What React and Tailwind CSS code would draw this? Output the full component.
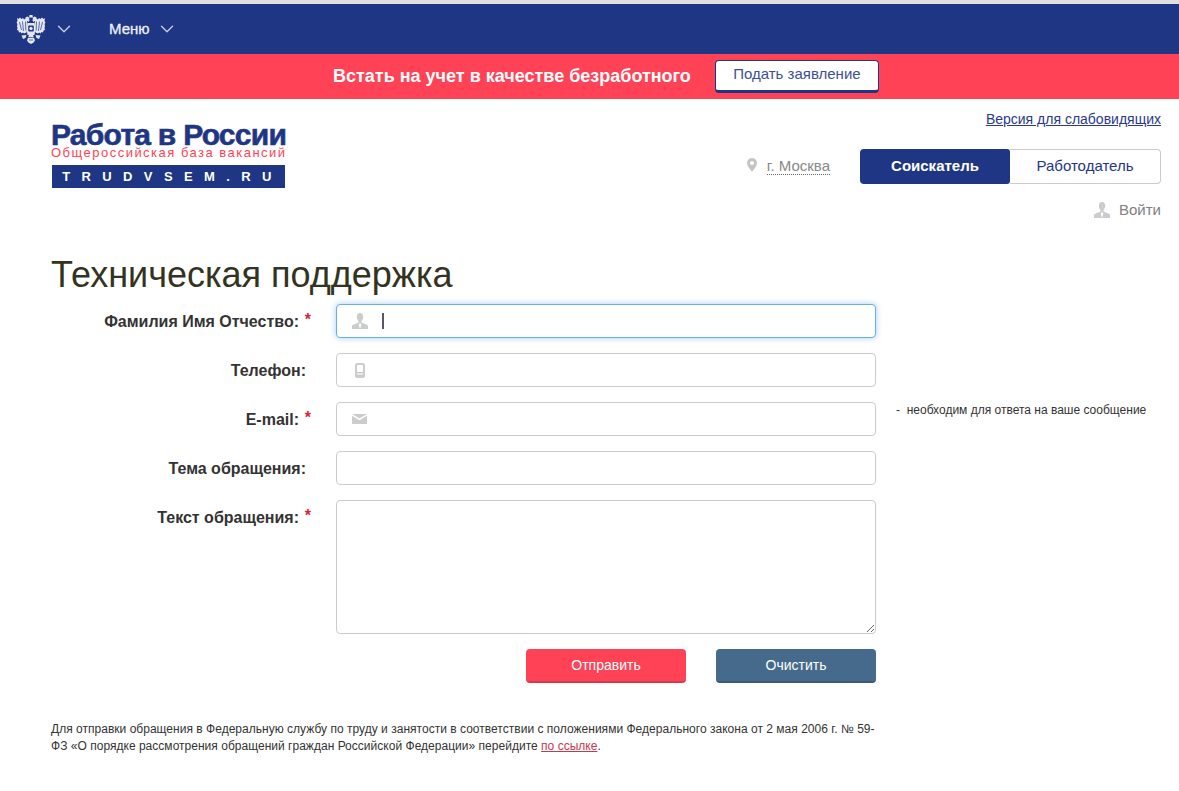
import { ChevronDown } from 'lucide-react';

const navy = 'bg-[#1f3685]';

function Eagle() {
  return (
    <svg width="30" height="29" viewBox="0 0 30 29" fill="#e4e7f1">
      {/* wings */}
      <path d="M1 3l1.500 1L4 2.500 5.500 4 7 3l1 1.500L9.500 3.500 11 6l.8 6-1.300 5.500-2.500 1-1-1-1.500 1-1-1.500-1.500.5-.5-2-1.500-.5.5-2L1 11l.5-2L.5 7.500 1.500 6z" />
      <path d="M29 3l-1.500 1L26 2.500 24.500 4 23 3l-1 1.500-1.500-1L19 6l-.8 6 1.300 5.500 2.500 1 1-1 1.500 1 1-1.500 1.500.5.500-2 1.500-.5-.5-2L29 11l-.5-2 1-1.500-1-1.500z" />
      {/* heads and crowns */}
      <path d="M13.500 0h3l.5 2.500h-4z" />
      <path d="M9.500 2.500l2-1 1.500 1 .5 3-1 1.500-1-1-2 .5z" />
      <path d="M20.500 2.500l-2-1-1.500 1-.5 3 1 1.500 1-1 2 .5z" />
      {/* body with shield */}
      <path d="M11.500 8h7l1 6-1 6h-7l-1-6z" />
      <rect x="12.200" y="10.500" width="5.600" height="6" rx="1" fill="#1f3685" />
      <circle cx="15" cy="13.500" r="1.700" />
      {/* tail and legs */}
      <path d="M13 20h4l2 5.500-1.500 2-2.500 1.500-2.500-1.500-1.500-2z" />
      <path d="M5.500 20.500l5-.5-1 3-2.500 1zM24.500 20.500l-5-.5 1 3 2.500 1z" />
      <g stroke="#1f3685" strokeWidth="0.7" fill="none">
        <path d="M3.500 7l2 8M6.500 6.500l1 9.500M9.500 6.500l.3 9" />
        <path d="M26.500 7l-2 8M23.500 6.500l-1 9.500M20.500 6.500l-.3 9" />
        <path d="M12 22.500h6M13 25h4" />
      </g>
    </svg>
  );
}

function PersonIcon({ className }) {
  return (
    <svg className={className} width="16" height="16" viewBox="0 0 16 16" fill="#cccccc">
      <path d="M8 0c2 0 3.200 1.500 3.200 3.800 0 1.800-.8 3.500-1.700 4.400v1.300L15.500 12c.4.200.5.600.5 1v3H0v-3c0-.4.100-.8.500-1l6-2.500V8.200C5.600 7.300 4.800 5.600 4.800 3.800 4.800 1.500 6 0 8 0z" />
      <path d="M7.300 10.500h1.400l.5 1-.7 3.500h-.9l-.8-3.500z" fill="#ffffff" />
    </svg>
  );
}

function PhoneIcon() {
  return (
    <svg width="10" height="15" viewBox="0 0 10 15" fill="#cccccc">
      <path d="M2.500 0h5A2.500 2.500 0 0 1 10 2.500v10A2.500 2.500 0 0 1 7.500 15h-5A2.500 2.500 0 0 1 0 12.500v-10A2.500 2.500 0 0 1 2.500 0z" />
      <rect x="2" y="2" width="6" height="7" rx="1" fill="#ffffff" />
      <rect x="2" y="10.500" width="6" height="1" fill="#ffffff" />
    </svg>
  );
}

function MailIcon() {
  return (
    <svg width="15" height="10" viewBox="0 0 15 10" fill="#cccccc">
      <path d="M0 0h15L7.500 4.500z" />
      <path d="M0 1.800l7.500 4.500L15 1.800V10H0z" />
    </svg>
  );
}

function PinIcon() {
  return (
    <svg className="mb-[3px]" width="10" height="14" viewBox="0 0 10 14" fill="#c4c4c4">
      <path fillRule="evenodd" d="M5 0a5 5 0 0 1 5 5c0 3-3 6-5 9-2-3-5-6-5-9a5 5 0 0 1 5-5zm0 3a2 2 0 1 0 0 4 2 2 0 0 0 0-4z" />
    </svg>
  );
}

function Row({ label, required, children, note }) {
  return (
    <div className="flex items-start">
      <label className="w-[285px] shrink-0 flex justify-end pr-[30px] pt-[9px] text-[16px] leading-[18px] font-bold text-[#333333]">
        {required ? (
          <span className="relative -left-[7px] whitespace-nowrap">
            {label}
            <span className="absolute -right-[12px] -top-[2px] font-bold text-[#d4243e]">*</span>
          </span>
        ) : label}
      </label>
      {children}
      {note}
    </div>
  );
}

function Field({ icon, cursor }) {
  return (
    <div className={`w-[540px] h-[34px] bg-white rounded-[4px] border flex items-center ${cursor ? 'border-[#66afe9] shadow-[0_0_6px_rgba(102,175,233,0.6)]' : 'border-[#cccccc]'}`}>
      <span className="w-[45px] flex justify-center">{icon}</span>
      {cursor && <span className="w-[2px] h-[16px] bg-[#555a66]"></span>}
    </div>
  );
}

export default function App() {
  return (
    <div className="min-h-[791px] bg-white font-['Liberation_Sans',Arial,sans-serif] text-[#333333]">
      <div className="h-[4px] bg-[#e0e0e0]"></div>

      <div className={`h-[50px] ${navy} flex items-center pl-[16px] text-white`}>
        <Eagle />
        <ChevronDown className="ml-[7px] text-[#c5cbe0]" size={22} strokeWidth={1.5} />
        <span className="ml-[34px] text-[15px] font-normal text-[#f0f2f8] [-webkit-text-stroke:0.3px_#f0f2f8]">Меню</span>
        <ChevronDown className="ml-[6px] text-[#c5cbe0]" size={22} strokeWidth={1.5} />
      </div>

      <div className="h-[45px] bg-[#ff4255] flex items-center pl-[333px]">
        <span className="text-[18px] font-bold text-white">Встать на учет в качестве безработного</span>
        <button className="ml-[24px] w-[164px] h-[33px] bg-white rounded-[4px] border border-[#1f3685] border-b-[3px] text-[15px] text-[#3c4f94] pb-[2px]">
          Подать заявление
        </button>
      </div>

      <div className="flex justify-between pl-[51px] pr-[18px] h-[130px]">
        <div className="pt-[22px] w-[236px]">
          <div className="text-[30px] leading-[28px] h-[24px] font-bold text-[#1f3685] tracking-[-0.75px] whitespace-nowrap [-webkit-text-stroke:0.6px_#1f3685]">Работа в России</div>
          <div className="text-[13px] leading-[14px] h-[19px] text-[#ff4255] tracking-[1.48px] whitespace-nowrap mt-[1px]">Общероссийская база вакансий</div>
          <div className={`ml-[1px] w-[233px] h-[23px] ${navy} text-white text-[13px] font-bold tracking-[11.4px] pl-[8px] flex items-center justify-center whitespace-nowrap`}>TRUDVSEM.RU</div>
        </div>

        <div className="flex flex-col items-end pt-[11px]">
          <a className="text-[14px] leading-[18px] text-[#2a3a86] underline">Версия для слабовидящих</a>
          <div className="flex items-center mt-[21px]">
            <PinIcon />
            <span className="ml-[10px] text-[15px] text-[#888888] border-b border-dotted border-[#666666] leading-[16px]">г. Москва</span>
            <div className="ml-[30px] flex">
              <span className={`w-[150px] h-[35px] ${navy} rounded-l-[4px] rounded-r-[3px] text-white text-[15px] font-bold flex items-center justify-center`}>Соискатель</span>
              <span className="w-[151px] h-[35px] rounded-r-[4px] border border-l-0 border-[#cccccc] text-[15px] text-[#1f3685] flex items-center justify-center">Работодатель</span>
            </div>
          </div>
          <div className="flex items-center mt-[17px]">
            <PersonIcon />
            <span className="ml-[9px] text-[15px] leading-[18px] text-[#808080]">Войти</span>
          </div>
        </div>
      </div>

      <div className="pl-[51px]">
        <h1 className="text-[36px] leading-[40px] text-[#333322] font-normal mt-[26px] mb-[9px]">Техническая поддержка</h1>

        <div className="flex flex-col gap-[15px]">
          <Row label="Фамилия Имя Отчество:" required>
            <Field icon={<PersonIcon />} cursor />
          </Row>
          <Row label="Телефон:">
            <Field icon={<PhoneIcon />} />
          </Row>
          <Row
            label="E-mail:"
            required
            note={<span className="ml-[20px] text-[12px] leading-[16px] whitespace-nowrap text-[#333333]">-&nbsp; необходим для ответа на ваше сообщение</span>}
          >
            <Field icon={<MailIcon />} />
          </Row>
          <Row label="Тема обращения:">
            <Field />
          </Row>
          <Row label="Текст обращения:" required>
            <textarea className="block w-[540px] h-[134px] bg-white rounded-[4px] border border-[#cccccc] resize-y outline-none"></textarea>
          </Row>
        </div>

        <div className="flex w-[825px] justify-end gap-[30px] mt-[15px]">
          <button className="w-[160px] h-[34px] rounded-[4px] bg-[#ff4255] border-b-2 border-[#d93a4b] text-white text-[14px]">Отправить</button>
          <button className="w-[160px] h-[34px] rounded-[4px] bg-[#466a8c] border-b-2 border-[#3b5a78] text-white text-[14px]">Очистить</button>
        </div>

        <p className="w-[826px] mt-[38px] text-[12px] leading-[17px] tracking-[0.02px] text-[#333333]">
          Для отправки обращения в Федеральную службу по труду и занятости в соответствии с положениями Федерального закона от 2 мая 2006 г. № 59-ФЗ «О порядке рассмотрения обращений граждан Российской Федерации» перейдите <a className="text-[#c8374a] underline">по ссылке</a>.
        </p>
      </div>
    </div>
  );
}
